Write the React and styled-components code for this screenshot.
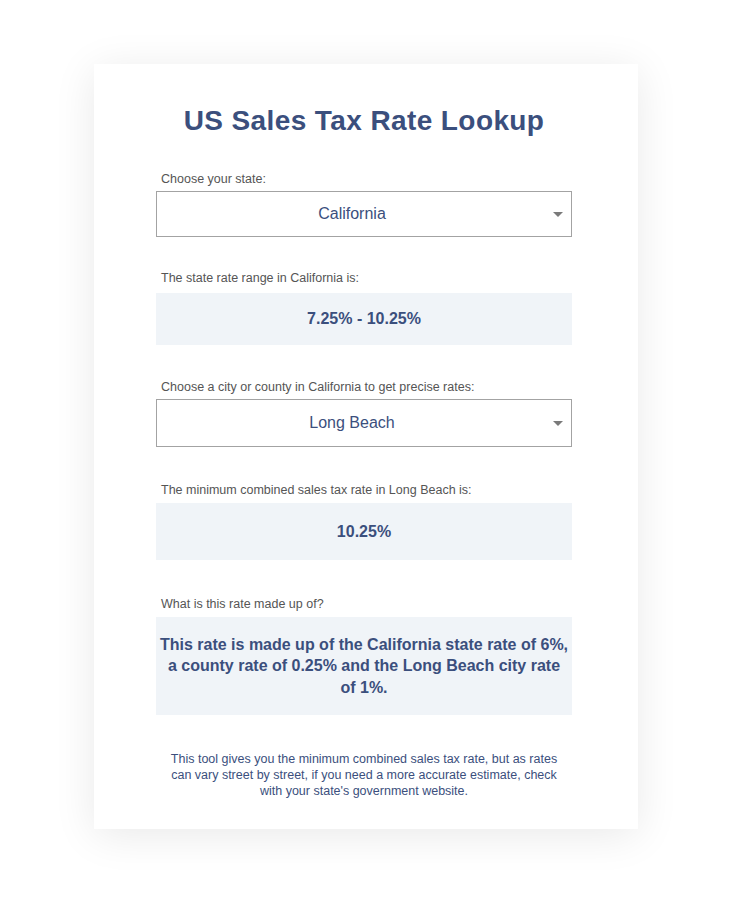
import styled, { createGlobalStyle } from "styled-components";

const GlobalStyle = createGlobalStyle`
  body {
    margin: 0;
    background: #ffffff;
    font-family: "Liberation Sans", Arial, sans-serif;
  }
`;

const Page = styled.div`
  display: flex;
  justify-content: center;
  padding: 64px 0 78px;
`;

const Card = styled.main`
  width: 544px;
  box-sizing: border-box;
  padding: 41px 66px 30px 62px;
  background: #fff;
  box-shadow: 0 6px 40px rgba(0, 0, 0, 0.09);
`;

const Title = styled.h1`
  margin: 0 0 35px;
  text-align: center;
  font-size: 28px;
  letter-spacing: 0.4px;
  font-weight: bold;
  color: #3b4f7d;
`;

const Field = styled.section`
  margin-bottom: ${(p) => p.$gap ?? 36}px;
`;

const Label = styled.div`
  padding-left: 5px;
  margin-bottom: ${(p) => p.$gap ?? 5}px;
  font-size: 12.5px;
  color: #555;
`;

const SelectBox = styled.div`
  position: relative;
  height: ${(p) => p.$height}px;
  border: 1px solid #a3a3a3;
  box-sizing: border-box;
  padding-right: 24px;
  display: flex;
  align-items: center;
  justify-content: center;
  font-size: 16px;
  color: #3b4f7d;
`;

const Caret = styled.span`
  position: absolute;
  right: 8px;
  top: 50%;
  margin-top: -2px;
  width: 0;
  height: 0;
  border-left: 5px solid transparent;
  border-right: 5px solid transparent;
  border-top: 5px solid #7a7a7a;
`;

const Result = styled.div`
  background: #f0f4f8;
  min-height: ${(p) => p.$height}px;
  box-sizing: border-box;
  padding: 10px 3px;
  display: flex;
  align-items: center;
  justify-content: center;
  text-align: center;
  font-size: 16px;
  line-height: 21.5px;
  font-weight: bold;
  color: #3b4f7d;
`;

const Note = styled.p`
  margin: 36px 0 0;
  padding: 0 6px;
  text-align: center;
  font-size: 12.5px;
  line-height: 16px;
  color: #3b4f7d;
`;

const Select = ({ value, height }) => (
  <SelectBox $height={height}>
    {value}
    <Caret />
  </SelectBox>
);

export default function App() {
  return (
    <>
      <GlobalStyle />
      <Page>
        <Card>
          <Title>US Sales Tax Rate Lookup</Title>
          <Field $gap={34}>
            <Label>Choose your state:</Label>
            <Select value="California" height={46} />
          </Field>
          <Field $gap={35}>
            <Label $gap={8}>The state rate range in California is:</Label>
            <Result $height={52}>7.25% - 10.25%</Result>
          </Field>
          <Field $gap={36}>
            <Label>Choose a city or county in California to get precise rates:</Label>
            <Select value="Long Beach" height={48} />
          </Field>
          <Field $gap={37}>
            <Label $gap={6}>The minimum combined sales tax rate in Long Beach is:</Label>
            <Result $height={57}>10.25%</Result>
          </Field>
          <Field $gap={0}>
            <Label $gap={6}>What is this rate made up of?</Label>
            <Result $height={98}>
              This rate is made up of the California state rate of 6%, a county
              rate of 0.25% and the Long Beach city rate of 1%.
            </Result>
          </Field>
          <Note>
            This tool gives you the minimum combined sales tax rate, but as
            rates can vary street by street, if you need a more accurate
            estimate, check with your state's government website.
          </Note>
        </Card>
      </Page>
    </>
  );
}
